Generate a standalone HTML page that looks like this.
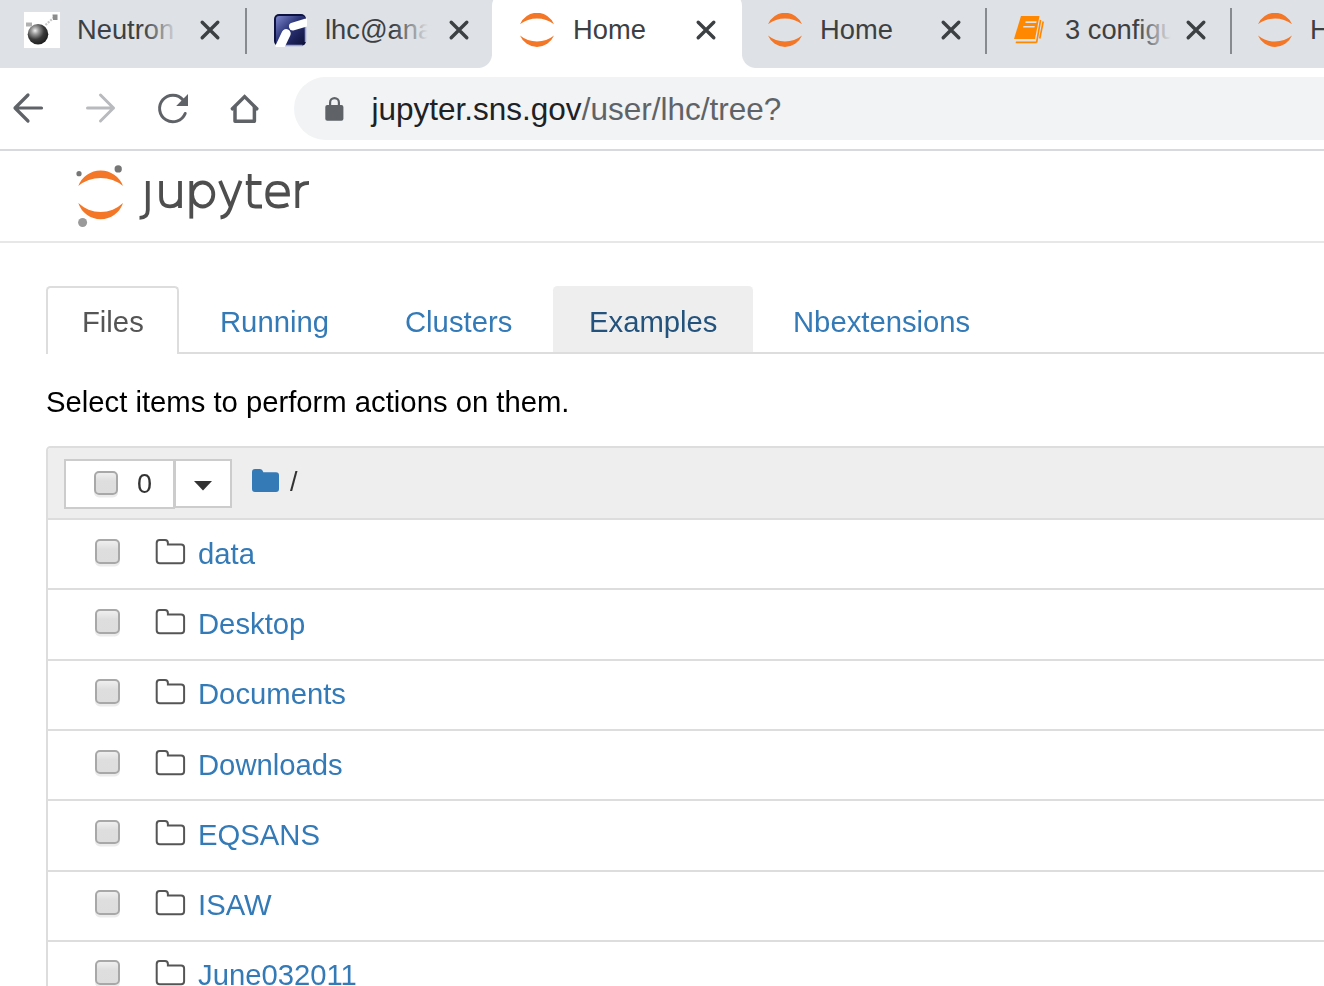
<!DOCTYPE html>
<html><head><meta charset="utf-8">
<style>
*{box-sizing:border-box}
html,body{margin:0;padding:0}
body{width:1324px;height:986px;overflow:hidden;position:relative;background:#fff;font-family:"Liberation Sans",sans-serif}
.abs{position:absolute}
#strip{left:0;top:0;width:1324px;height:68px;background:#dee1e6}
.ttl{position:absolute;top:14px;height:32px;line-height:32px;font-size:27.3px;color:#3c4043;white-space:nowrap;overflow:hidden}
.fade{position:absolute;top:0;right:0;width:34px;height:32px;background:linear-gradient(to right,rgba(222,225,230,0),#dee1e6)}
.sep{position:absolute;top:8px;width:2px;height:46px;background:#878a8f}
.cls{position:absolute;top:18.6px;width:22px;height:22px}
#toolbar{left:0;top:68px;width:1324px;height:81px;background:#fff}
#tbline{left:0;top:149px;width:1324px;height:2px;background:#d8d9dd}
#omni{left:294px;top:77px;width:1100px;height:63px;border-radius:31.5px;background:#f1f3f4}
.url{position:absolute;left:371.5px;top:89px;height:40px;line-height:40px;font-size:31.5px;color:#202124;white-space:nowrap}
.url span{color:#5f6368}
.t29{font-size:29.25px;line-height:40px;height:40px;white-space:nowrap;will-change:transform}
.lnk{color:#337ab7}
.row{position:absolute;left:46px;width:1300px;height:70.15px;border-top:2px solid #ddd}
.cb{position:absolute;left:49px;width:24.5px;height:24.5px;border:2px solid #a8a8a8;border-radius:5px;background:linear-gradient(#efefef,#dedede 40%,#dddddd);box-shadow:0 2.4px 0 #ebebeb}
.fo{position:absolute;left:108px;width:32px;height:28px}
.nm{position:absolute;left:152px;font-size:29.25px;line-height:40px;height:40px;color:#337ab7;white-space:nowrap;will-change:transform}
</style></head>
<body>
<!-- ===== TAB STRIP ===== -->
<div id="strip" class="abs">
  <!-- tab 1 -->
  <svg class="abs" style="left:24px;top:12px" width="36" height="36" viewBox="0 0 36 36">
    <rect x="0" y="0" width="36" height="36" fill="#fff"/>
    <defs><radialGradient id="ball" cx="0.36" cy="0.32" r="0.72"><stop offset="0" stop-color="#f0f0f0"/><stop offset="0.25" stop-color="#9a9a9a"/><stop offset="0.6" stop-color="#3a3a3a"/><stop offset="1" stop-color="#1c1c1c"/></radialGradient></defs>
    <circle cx="14" cy="22.3" r="10.3" fill="url(#ball)"/>
    <path d="M21.5 13 L31 4.5" stroke="#c8c8c8" stroke-width="2.2" stroke-dasharray="2 1.2"/>
    <path d="M28.5 2.5 H33.5 V8 H29 Z" fill="#8c8c8c"/>
    <path d="M2 10.5 H8 V14.5 H2 Z" fill="#b0b0b0"/>
  </svg>
  <div class="ttl" style="left:77px;width:101px">Neutron<div class="fade"></div></div>
  <svg class="cls" style="left:199px"><path d="M3.2 3.2 L18.8 18.8 M18.8 3.2 L3.2 18.8" stroke="#3c4043" stroke-width="3.4" stroke-linecap="round"/></svg>
  <div class="sep" style="left:245px"></div>
  <!-- tab 2 -->
  <svg class="abs" style="left:273px;top:13px" width="34" height="34" viewBox="0 0 34 34">
    <defs><linearGradient id="lhcg" x1="0" y1="0" x2="1" y2="1"><stop offset="0" stop-color="#7d86cc"/><stop offset="0.45" stop-color="#2c3478"/><stop offset="1" stop-color="#0c1038"/></linearGradient></defs>
    <rect x="1" y="1" width="32" height="32" rx="5" fill="#0d1240"/>
    <rect x="3" y="3" width="29" height="29" rx="3" fill="url(#lhcg)"/>
    <path d="M29.5 32.5 H8 M32.5 29 V12" stroke="#9aa2e0" stroke-width="1.5"/>
    <path d="M20 13.5 L33 9.6" stroke="#fff" stroke-width="8" stroke-linecap="round"/>
    <path d="M13.2 20.5 L7 33.5" stroke="#fff" stroke-width="9" stroke-linecap="round"/>
  </svg>
  <div class="ttl" style="left:325px;width:103px">lhc@ana<div class="fade"></div></div>
  <svg class="cls" style="left:448px"><path d="M3.2 3.2 L18.8 18.8 M18.8 3.2 L3.2 18.8" stroke="#3c4043" stroke-width="3.4" stroke-linecap="round"/></svg>
  <!-- tab 3 active -->
  <div class="abs" style="left:492px;top:-8px;width:250px;height:76px;background:#fff;border-radius:14px 14px 0 0"></div>
  <div class="abs" style="left:478px;top:54px;width:14px;height:14px;background:radial-gradient(circle at 0 0,rgba(255,255,255,0) 13.5px,#fff 14.5px)"></div>
  <div class="abs" style="left:742px;top:54px;width:14px;height:14px;background:radial-gradient(circle at 100% 0,rgba(255,255,255,0) 13.5px,#fff 14.5px)"></div>
  <svg class="abs" style="left:520px;top:13px" width="34" height="34" viewBox="0 0 34 34"><path d="M0 11.2 A18.35 18.35 0 0 1 34 11.2 A28.7 28.7 0 0 0 0 11.2Z M0 22.6 A18.4 18.4 0 0 0 34 22.6 A27.2 27.2 0 0 1 0 22.6Z" fill="#f37726"/></svg>
  <div class="ttl" style="left:573px;width:110px">Home</div>
  <svg class="cls" style="left:695px"><path d="M3.2 3.2 L18.8 18.8 M18.8 3.2 L3.2 18.8" stroke="#3c4043" stroke-width="3.4" stroke-linecap="round"/></svg>
  <!-- tab 4 -->
  <svg class="abs" style="left:768px;top:13px" width="34" height="34" viewBox="0 0 34 34"><path d="M0 11.2 A18.35 18.35 0 0 1 34 11.2 A28.7 28.7 0 0 0 0 11.2Z M0 22.6 A18.4 18.4 0 0 0 34 22.6 A27.2 27.2 0 0 1 0 22.6Z" fill="#f37726"/></svg>
  <div class="ttl" style="left:820px;width:110px">Home</div>
  <svg class="cls" style="left:940px"><path d="M3.2 3.2 L18.8 18.8 M18.8 3.2 L3.2 18.8" stroke="#3c4043" stroke-width="3.4" stroke-linecap="round"/></svg>
  <div class="sep" style="left:985px"></div>
  <!-- tab 5 -->
  <svg class="abs" style="left:1008px;top:8px" width="44" height="44" viewBox="0 0 44 44">
    <path d="M13 8 H31.5 L27 31 H6 Z" fill="#ff8800"/>
    <path d="M17.6 13.2 H28.6 L28.3 15 H17.3 Z M15.3 17.9 H26.8 L26.5 19.6 H15 Z" fill="#dee1e6"/>
    <path d="M8 33.4 H29 L28.6 35.3 H7.6 Z" fill="#ff8800"/>
    <path d="M32.6 12 L28.6 34.5 M35.2 13.5 L31.8 30.5" stroke="#ff8800" stroke-width="1.6" fill="none"/>
  </svg>
  <div class="ttl" style="left:1065px;width:106px">3 configu<div class="fade"></div></div>
  <svg class="cls" style="left:1185px"><path d="M3.2 3.2 L18.8 18.8 M18.8 3.2 L3.2 18.8" stroke="#3c4043" stroke-width="3.4" stroke-linecap="round"/></svg>
  <div class="sep" style="left:1230px"></div>
  <!-- tab 6 -->
  <svg class="abs" style="left:1258px;top:13px" width="34" height="34" viewBox="0 0 34 34"><path d="M0 11.2 A18.35 18.35 0 0 1 34 11.2 A28.7 28.7 0 0 0 0 11.2Z M0 22.6 A18.4 18.4 0 0 0 34 22.6 A27.2 27.2 0 0 1 0 22.6Z" fill="#f37726"/></svg>
  <div class="ttl" style="left:1310px;width:40px">Home</div>
</div>

<!-- ===== TOOLBAR ===== -->
<div id="toolbar" class="abs"></div>
<svg class="abs" style="left:0;top:68px" width="300" height="82" viewBox="0 68 300 82">
  <g fill="none" stroke="#5f6368" stroke-width="3.2" stroke-linecap="round" stroke-linejoin="round">
    <path d="M15.5 108 H41.5 M28 95 L15 108 L28 121"/>
    <path d="M183.1 99.95 A13.3 13.3 0 1 0 185.2 113.5" stroke-width="3"/>
    <path d="M232.4 108.8 L244.6 96.6 L256.8 108.8" stroke-width="3.5" stroke-linejoin="miter"/><path d="M235 106.5 V121.3 H254.4 V106.5" stroke-width="3.5" stroke-linecap="butt"/>
  </g>
  <path d="M87.5 108 H113.5 M100.5 95 L113.5 108 L100.5 121" fill="none" stroke="#b8babd" stroke-width="3" stroke-linecap="round" stroke-linejoin="round"/>
  <path d="M188 94 V105.9 H176.2 Z" fill="#5f6368"/>
</svg>
<div id="omni" class="abs"></div>
<svg class="abs" style="left:320px;top:92px" width="30" height="32" viewBox="0 0 30 32">
  <path d="M10.1 13.5 V10.5 A4.4 4.4 0 0 1 18.9 10.5 V13.5" fill="none" stroke="#5f6368" stroke-width="2.2"/>
  <rect x="5.3" y="12.9" width="18.1" height="15.9" rx="2" fill="#5f6368"/>
</svg>
<div class="url">jupyter.sns.gov<span>/user/lhc/tree?</span></div>
<div id="tbline" class="abs"></div>

<!-- ===== JUPYTER HEADER ===== -->
<svg class="abs" style="left:0;top:151px" width="330" height="90" viewBox="0 151 330 90">
  <path d="M78.3 185.9 A23.86 23.86 0 0 1 123 185.9 A35.2 35.2 0 0 0 78.3 185.9Z M78.3 203.1 A23.5 23.5 0 0 0 123 203.1 A32.5 32.5 0 0 1 78.3 203.1Z" fill="#f37726"/>
  <circle cx="79" cy="173.7" r="2.6" fill="#767677"/>
  <circle cx="118.2" cy="168.9" r="3.65" fill="#767677"/>
  <circle cx="82.6" cy="222.5" r="4.5" fill="#9a9a9a"/>
  <g fill="none" stroke="#4e4e4e" stroke-width="3.8">
    <path d="M147.8 180.9 V210 Q147.8 217.8 139.5 217.8"/>
    <path d="M161.1 180.9 V197 Q161.1 206.3 170 206.3 Q178.3 206.3 180 199 M180 180.9 V208.1"/>
    <path d="M191.3 181 V218.6"/>
    <ellipse cx="202.7" cy="194.5" rx="10.6" ry="12"/>
    <path d="M220 180.9 L230.9 207.3 M240.6 180.9 L230 209 Q227 216.8 220.5 217.5"/>
    <path d="M249.7 174.1 V201 Q249.7 206.5 255.5 206.5 H262 M245.8 183 H261.5"/>
    <path d="M266.8 194.5 H288 Q288 182.8 277.5 182.8 Q267.2 182.8 267.2 194.5 Q267.2 206.5 278.5 206.5 Q284 206.5 288.3 204.5"/>
    <path d="M297.3 181 V208.1 M297.3 191 Q298.5 182.8 309 182.8"/>
  </g>
</svg>
<div class="abs" style="left:0;top:241px;width:1324px;height:2px;background:#e7e7e7"></div>

<!-- ===== NAV TABS ===== -->
<div class="abs" style="left:46px;top:352px;width:1300px;height:2px;background:#ddd"></div>
<div class="abs" style="left:46px;top:286px;width:132.5px;height:68px;background:#fff;border:2px solid #ddd;border-bottom:none;border-radius:4.5px 4.5px 0 0"></div>
<div class="abs" style="left:553px;top:286px;width:199.5px;height:66px;background:#eee;border-radius:4.5px 4.5px 0 0"></div>
<div class="abs t29" style="left:82px;top:301.5px;color:#555">Files</div>
<div class="abs t29 lnk" style="left:219.7px;top:301.5px">Running</div>
<div class="abs t29 lnk" style="left:405px;top:301.5px">Clusters</div>
<div class="abs t29" style="left:589px;top:301.5px;color:#23527c">Examples</div>
<div class="abs t29 lnk" style="left:793px;top:301.5px">Nbextensions</div>

<div class="abs t29" style="left:46px;top:381.5px;color:#000">Select items to perform actions on them.</div>

<!-- ===== LIST ===== -->
<div class="abs" style="left:46px;top:446px;width:1300px;height:600px;border:2px solid #ddd;border-radius:4.5px 4.5px 0 0;overflow:hidden">
  <div class="abs" style="left:0;top:0;width:1300px;height:72px;background:#eee"></div>
</div>
<!-- button group -->
<div class="abs" style="left:64px;top:459px;width:111px;height:49.5px;background:#fff;border:2px solid #ccc"></div>
<div class="abs" style="left:173.5px;top:459px;width:58px;height:48.5px;background:#fff;border:2px solid #ccc"></div>
<div class="cb" style="left:93.5px;top:470.5px"></div>
<div class="abs" style="left:136.5px;top:464px;font-size:27px;line-height:40px;color:#333;will-change:transform">0</div>
<svg class="abs" style="left:193px;top:480px" width="20" height="12"><path d="M1 1 H19 L10 10.5Z" fill="#333"/></svg>
<svg class="abs" style="left:250px;top:467px" width="32" height="28" viewBox="0 0 32 28">
  <path d="M2 5 Q2 2 5 2 H10 Q12.5 2 13 4.5 L13.3 5.2 H26 Q29 5.2 29 8.2 V22 Q29 25 26 25 H5 Q2 25 2 22 Z" fill="#337ab7"/>
</svg>
<div class="abs" style="left:290px;top:462px;font-size:27px;line-height:40px;color:#333;will-change:transform">/</div>

<!-- rows -->
<!--ROWS-->
<div class="abs" style="left:48px;top:518.00px;width:1290px;height:2px;background:#ddd"></div>
<div class="cb" style="left:95.3px;top:539.10px"></div>
<svg class="abs" style="left:150px;top:535.00px" width="40" height="32" viewBox="0 0 40 32"><path d="M6.7 8 Q6.7 5.1 9.6 5.1 H15 Q17.9 5.1 17.9 8 V9.6 H31.1 Q34.1 9.6 34.1 12.6 V25.2 Q34.1 28.2 31.1 28.2 H9.7 Q6.7 28.2 6.7 25.2 Z" fill="none" stroke="#555" stroke-width="2"/></svg>
<div class="nm" style="left:198px;top:534.00px">data</div>
<div class="abs" style="left:48px;top:588.30px;width:1290px;height:2px;background:#ddd"></div>
<div class="cb" style="left:95.3px;top:609.28px"></div>
<svg class="abs" style="left:150px;top:605.18px" width="40" height="32" viewBox="0 0 40 32"><path d="M6.7 8 Q6.7 5.1 9.6 5.1 H15 Q17.9 5.1 17.9 8 V9.6 H31.1 Q34.1 9.6 34.1 12.6 V25.2 Q34.1 28.2 31.1 28.2 H9.7 Q6.7 28.2 6.7 25.2 Z" fill="none" stroke="#555" stroke-width="2"/></svg>
<div class="nm" style="left:198px;top:604.18px">Desktop</div>
<div class="abs" style="left:48px;top:658.60px;width:1290px;height:2px;background:#ddd"></div>
<div class="cb" style="left:95.3px;top:679.46px"></div>
<svg class="abs" style="left:150px;top:675.36px" width="40" height="32" viewBox="0 0 40 32"><path d="M6.7 8 Q6.7 5.1 9.6 5.1 H15 Q17.9 5.1 17.9 8 V9.6 H31.1 Q34.1 9.6 34.1 12.6 V25.2 Q34.1 28.2 31.1 28.2 H9.7 Q6.7 28.2 6.7 25.2 Z" fill="none" stroke="#555" stroke-width="2"/></svg>
<div class="nm" style="left:198px;top:674.36px">Documents</div>
<div class="abs" style="left:48px;top:728.90px;width:1290px;height:2px;background:#ddd"></div>
<div class="cb" style="left:95.3px;top:749.64px"></div>
<svg class="abs" style="left:150px;top:745.54px" width="40" height="32" viewBox="0 0 40 32"><path d="M6.7 8 Q6.7 5.1 9.6 5.1 H15 Q17.9 5.1 17.9 8 V9.6 H31.1 Q34.1 9.6 34.1 12.6 V25.2 Q34.1 28.2 31.1 28.2 H9.7 Q6.7 28.2 6.7 25.2 Z" fill="none" stroke="#555" stroke-width="2"/></svg>
<div class="nm" style="left:198px;top:744.54px">Downloads</div>
<div class="abs" style="left:48px;top:799.20px;width:1290px;height:2px;background:#ddd"></div>
<div class="cb" style="left:95.3px;top:819.82px"></div>
<svg class="abs" style="left:150px;top:815.72px" width="40" height="32" viewBox="0 0 40 32"><path d="M6.7 8 Q6.7 5.1 9.6 5.1 H15 Q17.9 5.1 17.9 8 V9.6 H31.1 Q34.1 9.6 34.1 12.6 V25.2 Q34.1 28.2 31.1 28.2 H9.7 Q6.7 28.2 6.7 25.2 Z" fill="none" stroke="#555" stroke-width="2"/></svg>
<div class="nm" style="left:198px;top:814.72px">EQSANS</div>
<div class="abs" style="left:48px;top:869.50px;width:1290px;height:2px;background:#ddd"></div>
<div class="cb" style="left:95.3px;top:890.00px"></div>
<svg class="abs" style="left:150px;top:885.90px" width="40" height="32" viewBox="0 0 40 32"><path d="M6.7 8 Q6.7 5.1 9.6 5.1 H15 Q17.9 5.1 17.9 8 V9.6 H31.1 Q34.1 9.6 34.1 12.6 V25.2 Q34.1 28.2 31.1 28.2 H9.7 Q6.7 28.2 6.7 25.2 Z" fill="none" stroke="#555" stroke-width="2"/></svg>
<div class="nm" style="left:198px;top:884.90px">ISAW</div>
<div class="abs" style="left:48px;top:939.80px;width:1290px;height:2px;background:#ddd"></div>
<div class="cb" style="left:95.3px;top:960.18px"></div>
<svg class="abs" style="left:150px;top:956.08px" width="40" height="32" viewBox="0 0 40 32"><path d="M6.7 8 Q6.7 5.1 9.6 5.1 H15 Q17.9 5.1 17.9 8 V9.6 H31.1 Q34.1 9.6 34.1 12.6 V25.2 Q34.1 28.2 31.1 28.2 H9.7 Q6.7 28.2 6.7 25.2 Z" fill="none" stroke="#555" stroke-width="2"/></svg>
<div class="nm" style="left:198px;top:955.08px">June032011</div>
<div class="abs" style="left:48px;top:1010.10px;width:1290px;height:2px;background:#ddd"></div>
<div class="cb" style="left:95.3px;top:1030.36px"></div>
<svg class="abs" style="left:150px;top:1026.26px" width="40" height="32" viewBox="0 0 40 32"><path d="M6.7 8 Q6.7 5.1 9.6 5.1 H15 Q17.9 5.1 17.9 8 V9.6 H31.1 Q34.1 9.6 34.1 12.6 V25.2 Q34.1 28.2 31.1 28.2 H9.7 Q6.7 28.2 6.7 25.2 Z" fill="none" stroke="#555" stroke-width="2"/></svg>
<div class="nm" style="left:198px;top:1025.26px">Links</div>
<!--/ROWS-->
</body></html>
